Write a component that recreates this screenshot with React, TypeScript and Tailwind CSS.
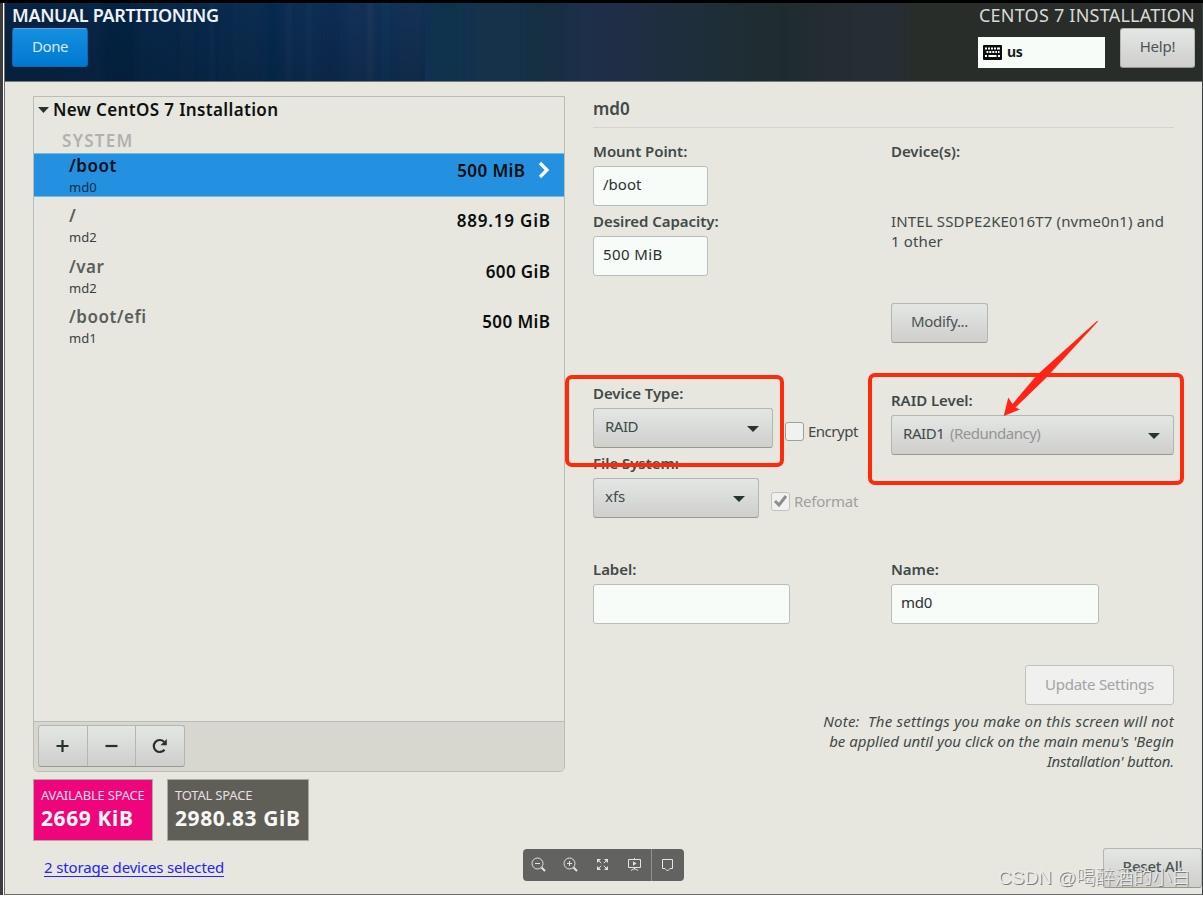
import type { ReactNode } from "react";
import clsx from "clsx";

const mountPoints = [
  { path: "/boot", device: "md0", size: "500 MiB", selected: true },
  { path: "/", device: "md2", size: "889.19 GiB" },
  { path: "/var", device: "md2", size: "600 GiB" },
  { path: "/boot/efi", device: "md1", size: "500 MiB" },
];

export default function App() {
  return (
    <div className="relative flex h-[897px] w-[1203px] flex-col overflow-hidden bg-white font-['Noto_Sans','Noto_Sans_CJK_SC',sans-serif] text-[15px] leading-5 text-[#3f4a49]">
      <div className="h-[3px] shrink-0 bg-black" />
      <div className="flex h-[892px] shrink-0">
        <div className="w-[3px] bg-[#3d3d3f]" />
        <div className="ml-px flex w-[1198px] flex-col border-b border-l border-[#6c6d6b] bg-[#e8e7df]">
          <Header />
          <main className="flex flex-1">
            <MountPointList />
            <Details />
          </main>
        </div>
        <div className="w-px bg-[#3a3f3f]" />
      </div>
      <Annotations />
      <ViewerToolbar />
      <div className="absolute top-[864px] left-[998px] font-['Liberation_Sans','Noto_Sans_CJK_SC',sans-serif] text-[19px] leading-7 font-light whitespace-nowrap text-[#ecece9] [text-shadow:1px_1px_0_#7d7d7b]">
        CSDN @喝醉酒的小白
      </div>
    </div>
  );
}

function Header() {
  return (
    <header className="relative flex h-[79px] shrink-0 justify-between overflow-hidden border-b border-[#74797c] bg-[#282c29]">
      <HeaderTexture />
      <div className="relative pl-[7px]">
        <h1 className="h-[25px] text-[18px] leading-[25px] font-semibold tracking-[-0.33px] whitespace-nowrap text-[#eef1f3]">
          MANUAL PARTITIONING
        </h1>
        <button className="flex h-[39px] w-[76px] items-center justify-center rounded-[3px] border border-[#0a68b4] border-t-[#4ba4e4] bg-linear-to-b from-[#158fe0] to-[#0079d0] pb-[3px] tracking-[-0.4px] text-[#d6e8f5]">
          Done
        </button>
      </div>
      <div className="relative pr-[7px]">
        <div className="h-[25px] text-right text-[18px] leading-[25px] tracking-[0.23px] whitespace-nowrap text-[#d9dad8]">
          CENTOS 7 INSTALLATION
        </div>
        <div className="flex justify-end gap-[15px]">
          <div className="mt-[9px] flex h-[31px] w-[127px] items-center gap-[5px] bg-[#f7fcf9] pl-[5px] text-[14px] font-bold tracking-[-0.4px] text-[#1c1f1f]">
            <KeyboardIcon />
            <span className="pb-[1px]">us</span>
          </div>
          <Button className="h-10 w-[75px] tracking-[-0.2px]">Help!</Button>
        </div>
      </div>
    </header>
  );
}

function HeaderTexture() {
  const streaks = [
    [100, 30, "#06233f"], [175, 14, "#0b2a4c"], [205, 3, "#153659"],
    [228, 24, "#102d50"], [262, 12, "#052b50"], [283, 2, "#244368"],
    [303, 2, "#234368"], [318, 15, "#082c51"], [342, 18, "#153359"],
    [363, 5, "#25405e"], [376, 9, "#11385b"], [393, 24, "#123257"],
    [427, 30, "#113449"], [470, 42, "#173148"], [521, 38, "#142d3f"],
  ] as const;
  return (
    <svg className="absolute inset-0 h-full w-full" preserveAspectRatio="none" viewBox="0 0 1197 78">
      <defs>
        <linearGradient id="sky">
          <stop stopColor="#082341" />
          <stop offset=".15" stopColor="#07284b" />
          <stop offset=".31" stopColor="#113158" />
          <stop offset=".42" stopColor="#15324b" />
          <stop offset=".5" stopColor="#1f2e48" />
          <stop offset=".58" stopColor="#1e2e3a" />
          <stop offset=".65" stopColor="#1f2c2f" />
          <stop offset=".72" stopColor="#272d34" />
          <stop offset=".745" stopColor="#272d34" />
          <stop offset=".76" stopColor="#282d29" />
          <stop offset="1" stopColor="#292d29" />
        </linearGradient>
        <linearGradient id="shade" x2="0" y2="1">
          <stop stopColor="#06162a" stopOpacity="0" />
          <stop offset="1" stopColor="#06162a" stopOpacity=".28" />
        </linearGradient>
        <filter id="soft"><feGaussianBlur stdDeviation="2 5" /></filter>
      </defs>
      <path fill="url(#sky)" d="M0 0h1197v78H0z" />
      <g filter="url(#soft)" opacity=".6">
        {streaks.map(([x, width, fill]) => (
          <rect key={x} x={x} y={-16} width={width} height={110} fill={fill} />
        ))}
      </g>
      <path fill="url(#shade)" d="M0 0h420v78H0z" />
    </svg>
  );
}

function MountPointList() {
  return (
    <section className="w-[560px] shrink-0 pt-[14px] pl-[28px]">
      <div className="flex h-[676px] w-[532px] flex-col rounded-b-[5px] border border-[#b9bdb9]">
        <div className="flex h-[26px] items-center pl-[4px] text-[17px] font-semibold tracking-[0.36px] text-[#0e1111]">
          <Caret className="mr-[4px] w-[11px]" />
          New CentOS 7 Installation
        </div>
        <div className="h-[30px] pt-[8px] pl-[28px] text-[17px] font-semibold tracking-[1.3px] text-[#b1b1ae]">SYSTEM</div>
        <ul>
          {mountPoints.map((mp) => (
            <li
              key={mp.path}
              className={clsx(
                "mb-[6.3px] flex h-11 justify-between border-y pr-[14px] pl-[35px]",
                mp.selected ? "border-[#7db7dd] bg-[#2391df]" : "border-transparent",
              )}
            >
              <div>
                <div className={clsx("h-[24px] text-[17px] leading-[24px] font-semibold tracking-[0.5px]", mp.selected ? "text-[#071019]" : "text-[#5a5f5d]")}>
                  {mp.path}
                </div>
                <div className={clsx("h-[18px] text-[13px] leading-[18px]", mp.selected ? "text-[#0e2c44]" : "text-[#3b403f]")}>{mp.device}</div>
              </div>
              <div className="flex items-start pt-[4px] text-[17px] leading-[26px] font-semibold text-[#0b0d0d]">
                <span className={mp.size.length > 7 ? "-mr-[0.8px] tracking-[0.8px]" : "-mr-[0.4px] tracking-[0.4px]"}>{mp.size}</span>
                {mp.selected && (
                  <svg className="mt-[3px] ml-[13px] h-[18px] w-[12px]" viewBox="0 0 12 18" fill="none">
                    <path d="M2 2l7 7-7 7" stroke="#fff" strokeWidth="3.2" />
                  </svg>
                )}
              </div>
            </li>
          ))}
        </ul>
        <div className="mt-auto h-[50px] rounded-b-[4px] border-t border-[#b9bdb9] bg-[#d8d7cf] px-[4px] pt-[3px]">
          <div className="flex h-[42px] w-[147px] divide-x divide-[#b3b6b2] rounded-[3px] border border-[#b3b6b2] border-b-[#979990] bg-linear-to-b from-[#e3e7e4] to-[#cfcfcc] text-[#26312f]">
            <IconButton><path d="M9.500 4v12M3.500 10h12" /></IconButton>
            <IconButton><path d="M3.500 10h12" /></IconButton>
            <IconButton>
              <path d="M14.500 13.700A6 6 0 1 1 14 5.700" />
              <path d="M16.800 3v6.300h-6.300z" fill="currentColor" stroke="none" />
            </IconButton>
          </div>
        </div>
      </div>
      <div className="mt-[7px] flex gap-[14px]">
        <SpaceBox label="AVAILABLE SPACE" value="2669 KiB" className="w-[120px] bg-[#ef047c]" />
        <SpaceBox label="TOTAL SPACE" value="2980.83 GiB" className="w-[142px] bg-[#5f5f57]" />
      </div>
      <a className="mt-[16px] ml-[11px] inline-block h-[20px] border-b border-[#2424ff] leading-[20px] tracking-[-0.15px] text-[#2424f5]">2 storage devices selected</a>
    </section>
  );
}

function SpaceBox({ label, value, className }: { label: string; value: string; className: string }) {
  return (
    <div className={clsx("h-[62px] border border-[#a9aaa5] pt-[6px] pl-[7px] whitespace-nowrap", className)}>
      <div className="text-[13px] leading-[18px] tracking-[-0.2px] text-[#e9dfe2]">{label}</div>
      <div className="text-[21px] leading-[28px] font-bold tracking-[0.6px] text-[#f7f7f5]">{value}</div>
    </div>
  );
}

function IconButton({ children }: { children: ReactNode }) {
  return (
    <button className="flex flex-1 items-center justify-center">
      <svg className="size-5" viewBox="0 0 20 20" fill="none" stroke="currentColor" strokeWidth="2.2">
        {children}
      </svg>
    </button>
  );
}

function Details() {
  return (
    <section className="flex w-[637px] flex-col pt-[14px] pl-[28px]">
      <h2 className="h-[32px] w-[581px] border-b border-[#d3d4d2] text-[17px] leading-[25px] font-semibold">md0</h2>
      <div className="flex pt-[13px]">
        <div className="w-[298px]">
          <Label>Mount Point:</Label>
          <TextInput className="w-[115px]">/boot</TextInput>
          <Label>Desired Capacity:</Label>
          <TextInput className="w-[115px] tracking-[0.4px]">500 MiB</TextInput>
          <Label className="mt-[107px]">Device Type:</Label>
          <div className="flex">
            <Select className="w-[180px] tracking-[-0.5px]">RAID</Select>
            <Checkbox className="ml-[12px] tracking-[-0.5px]">Encrypt</Checkbox>
          </div>
          <Label>File System:</Label>
          <div className="flex">
            <Select className="w-[166px]">xfs</Select>
            <Checkbox className="ml-[12px] tracking-[-0.25px]" checked>Reformat</Checkbox>
          </div>
          <Label className="mt-[41px]">Label:</Label>
          <TextInput className="w-[197px]" />
        </div>
        <div className="w-[283px]">
          <Label>Device(s):</Label>
          <p className="mt-[50px] h-10 tracking-[0.15px] whitespace-nowrap">
            INTEL SSDPE2KE016T7 (nvme0n1) and
            <br />1 other
          </p>
          <Button className="mt-[52px] h-10 w-[97px] tracking-[-0.35px]">Modify...</Button>
          <Label className="mt-[47px]">RAID Level:</Label>
          <Select className="w-[283px] tracking-[-0.4px]">
            RAID1 <span className="ml-[2px] tracking-[-0.5px] text-[#929694]">(Redundancy)</span>
          </Select>
          <Label className="mt-[104px]">Name:</Label>
          <TextInput className="w-[208px] tracking-[-0.3px]">md0</TextInput>
        </div>
      </div>
      <div className="mt-[41px] flex w-[581px] flex-col items-end">
        <button className="h-10 w-[149px] rounded-[3px] border border-[#bfc2bf] bg-[#f0f0ef] pb-[2px] tracking-[-0.25px] text-[#a0a5a4]">Update Settings</button>
        <p className="mt-[6px] text-right whitespace-nowrap italic">
          <span className="tracking-[0.24px]">Note:&nbsp; The settings you make on this screen will not</span>
          <br />
          be applied until you click on the main menu's 'Begin
          <br />
          <span className="tracking-[-0.2px]">Installation' button.</span>
        </p>
      </div>
      <Button className="mt-auto mb-[6px] ml-auto h-10 w-[99px] font-medium tracking-[-0.2px]">Reset All</Button>
    </section>
  );
}

function Label({ children, className = "mt-[5px]" }: { children: ReactNode; className?: string }) {
  return <div className={clsx("mb-[5px] h-5 leading-[21px] font-semibold tracking-[-0.05px] whitespace-nowrap first:mt-0", className)}>{children}</div>;
}

function TextInput({ children, className }: { children?: ReactNode; className: string }) {
  return (
    <div className={clsx("h-10 rounded-[3px] border border-[#b9bebb] bg-[#f7fcf9] pt-[7px] pl-[9px] text-[#2b3030]", className)}>{children}</div>
  );
}

function Button({ children, className }: { children: ReactNode; className: string }) {
  return (
    <button className={clsx("rounded-[3px] border border-[#b3b6b2] border-b-[#979990] bg-linear-to-b from-[#e3e7e4] to-[#cfcfcc] pb-[4px] whitespace-nowrap text-[#4b5454]", className)}>
      {children}
    </button>
  );
}

function Select({ children, className }: { children: ReactNode; className: string }) {
  return (
    <div className={clsx("flex h-10 items-center justify-between rounded-[3px] border border-[#b3b6b2] border-b-[#979990] bg-linear-to-b from-[#e3e7e4] to-[#cfcfcc] pr-[13px] pl-[11px]", className)}>
      <span className="pb-[4px]">{children}</span>
      <Caret className="mt-[2px] w-[12px]" />
    </div>
  );
}

function Caret({ className }: { className?: string }) {
  return (
    <svg className={clsx("h-[6px]", className)} viewBox="0 0 12 6" preserveAspectRatio="none">
      <path d="M0 0h12L6 6z" fill="#263532" />
    </svg>
  );
}

function Checkbox({ children, className, checked }: { children: ReactNode; className?: string; checked?: boolean }) {
  return (
    <div className={clsx("mt-[13px] flex h-5 gap-[4px]", checked && "text-[#9da19f]", className)}>
      <span className={clsx("mt-px flex size-[19px] items-center justify-center rounded-[3px] border bg-[#f1f2f0]", checked ? "border-[#bfc2bf]" : "border-[#9da09c]")}>
        {checked && (
          <svg className="size-[15px]" viewBox="0 0 15 15" fill="none">
            <path d="M2 7l4 4 7-9" stroke="#8b8e8d" strokeWidth="3" />
          </svg>
        )}
      </span>
      {children}
    </div>
  );
}

function KeyboardIcon() {
  return (
    <svg className="h-[15px] w-[19px]" viewBox="0 0 19 15">
      <rect width="19" height="15" rx="1" fill="#0b0c0c" />
      <path
        d="M2 3.500h15M3.500 7h13M2 11h2M5.500 11h8M15 11h2"
        stroke="#fff"
        strokeWidth="2"
      />
      <path d="M4.500 2v3M7.500 2v3M10.500 2v3M13.500 2v3M5.800 6v2.500M8.800 6v2.500M11.800 6v2.500M14.500 6v2.500" stroke="#0b0c0c" />
    </svg>
  );
}

function Annotations() {
  return (
    <>
      <div className="absolute top-[375px] left-[565px] h-[92px] w-[219px] rounded-[7px] border-4 border-[#ff2a0a]" />
      <div className="absolute top-[373px] left-[868px] h-[112px] w-[316px] rounded-[7px] border-4 border-[#ff2a0a]" />
      <svg className="absolute top-[320px] left-[1003px] h-[97px] w-[96px]" viewBox="0 0 96 97">
        <path d="M94.300 0.800L34 55 9.500 84 5.300 77.500 0.700 96 17 89.500 12.500 87.500 42 59 95 1.500z" fill="#ff2415" />
      </svg>
    </>
  );
}

function ViewerToolbar() {
  return (
    <div className="absolute top-[849px] left-[523px] flex h-8 w-[161px] rounded-[4px] bg-[#626260] text-[#e4e4e2]">
      <ToolIcon>
        <circle cx="6.500" cy="6.500" r="5.500" />
        <path d="M4 6.500h5" />
        <path d="M10.500 10.500l3.500 3.500" strokeWidth="2" />
      </ToolIcon>
      <ToolIcon>
        <circle cx="6.500" cy="6.500" r="5.500" />
        <path d="M4 6.500h5M6.500 4v5" />
        <path d="M10.500 10.500l3.500 3.500" strokeWidth="2" />
      </ToolIcon>
      <ToolIcon>
        <path d="M2 2h4L2 6zM13 2v4L9 2zM13 13H9l4-4zM2 13V9l4 4z" fill="currentColor" stroke="none" />
        <path d="M3 3l3.200 3.200M12 3L8.800 6.200M12 12L8.800 8.800M3 12l3.200-3.200" />
      </ToolIcon>
      <ToolIcon>
        <path d="M1.500 2.500h12v8h-12zM7.500 1v2M7.500 11v1.500M4 13.500L7.500 11.500l3.500 2" />
        <path d="M6 4.200v4.600L9.500 6.500z" fill="currentColor" stroke="none" />
      </ToolIcon>
      <ToolIcon className="border-l border-[#929290]">
        <path d="M2.500 2.500h10v9h-2.500L7.500 14l-2.500-2.500H2.500z" />
      </ToolIcon>
    </div>
  );
}

function ToolIcon({ children, className }: { children: ReactNode; className?: string }) {
  return (
    <button className={clsx("flex w-8 shrink-0 items-center justify-center", className)}>
      <svg className="size-4" viewBox="0 0 16 16" fill="none" stroke="currentColor">
        {children}
      </svg>
    </button>
  );
}
